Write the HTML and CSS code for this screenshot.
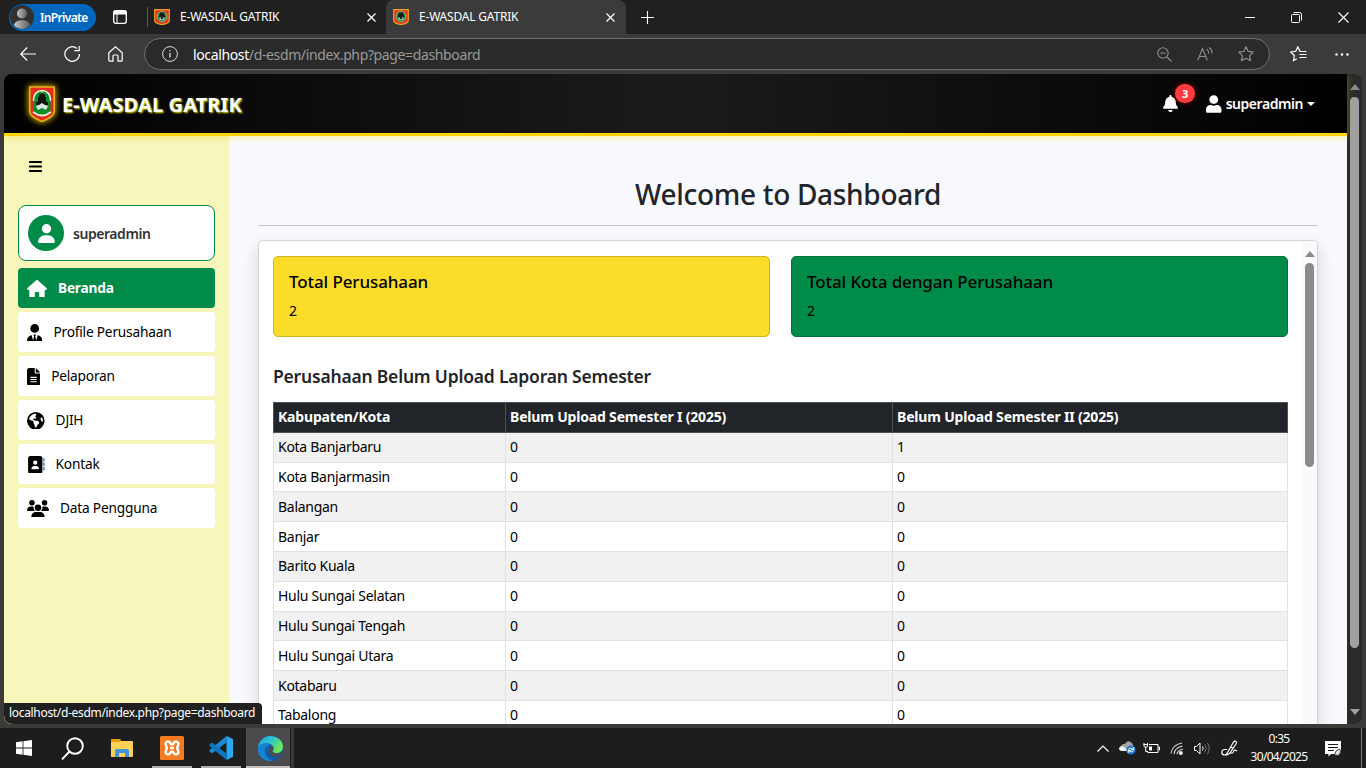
FILE: index.html
```html
<!DOCTYPE html>
<html lang="id">
<head>
<meta charset="utf-8">
<title>E-WASDAL GATRIK</title>
<link rel="stylesheet" href="styles.css">
</head>
<body>
<svg class="defs" width="0" height="0">
  <symbol id="shield" viewBox="0 0 26 36">
    <path d="M.8 1h24.4v24.5C25.2 30 19 33 13 35.5 7 33 .8 30 .8 25.5z" fill="#e32b1b" stroke="#e8b21c" stroke-width="1.6"/>
    <path d="M4.5 12C5 1.5 21 1.5 21.500 12v13c-3 5-14 5-17 0z" fill="#098f2f"/>
    <path d="M4.600 15C3.500 1 22.500 1 21.400 15" fill="none" stroke="#eef5dc" stroke-width="1.500"/>
    <path d="M12 6h2v2h2v3h1v5h2v3H7v-3h2v-5h1V8h2z" fill="#101510"/>
    <path d="M7 20l3-1 3-2 3 2 3 1-2 4-4-2-4 2z" fill="#dfe5e0"/>
    <path d="M4 26q9 7 18 0" fill="none" stroke="#f4e9cf" stroke-width="1.800"/>
    <circle cx="13" cy="6" r="1" fill="#f3d22e"/>
  </symbol>
  <symbol id="favicon" viewBox="0 0 16 16">
    <path d="M.7.6h14.600v11C15.300 13.600 12 15 8 15.600 4 15 .7 13.600.7 11.600z" fill="#e5321f" stroke="#e6a51e" stroke-width="1.200"/>
    <ellipse cx="8" cy="7.500" rx="5" ry="5.300" fill="#159947" stroke="#b9c79a" stroke-width=".6"/>
    <path d="M6 3.500h4l1.500 5h-7z" fill="#151a17"/><path d="M5 8.500h6l-1 2.500H6z" fill="#a9b5a9"/><path d="M7 7h2v3H7z" fill="#222"/>
  </symbol>
  <symbol id="user" viewBox="0 0 448 512"><path d="M224 256A128 128 0 1 0 224 0a128 128 0 1 0 0 256zm-45.700 48C79.800 304 0 383.800 0 482.300C0 498.700 13.300 512 29.700 512H418.300c16.400 0 29.700-13.300 29.700-29.700C448 383.800 368.200 304 269.700 304H178.300z"/></symbol>
</svg>
<div class="window">
  <div class="tabstrip">
    <div class="profile">
      <svg width="24" height="24" viewBox="0 0 24 24"><defs><linearGradient id="pg" x1="0" x2="1"><stop offset="0" stop-color="#c4c4c4"/><stop offset="1" stop-color="#5d5d5d"/></linearGradient></defs><circle cx="12" cy="12" r="12" fill="#33302f"/><circle cx="12" cy="8.500" r="5" fill="url(#pg)"/><path d="M4 20.500c0-7 16-7 16 0C15 25 9 25 4 20.500z" fill="url(#pg)"/></svg>
      <span>InPrivate</span>
    </div>
    <svg class="panes" width="14" height="14" viewBox="0 0 14 14"><rect x=".7" y=".7" width="12.600" height="12.600" rx="2" fill="none" stroke="#fff" stroke-width="1.300"/><path d="M1 1h12v3H1zM4 4v9" fill="#fff" stroke="#fff"/></svg>
    <div class="tab first"><svg width="16" height="16"><use href="#favicon"/></svg><span>E-WASDAL GATRIK</span><svg class="x" width="9" height="9" viewBox="0 0 9 9"><path d="M.5.5l8 8M8.500.5l-8 8" stroke="#fff" stroke-width="1.200"/></svg></div>
    <div class="tab active"><svg width="16" height="16"><use href="#favicon"/></svg><span>E-WASDAL GATRIK</span><svg class="x" width="9" height="9" viewBox="0 0 9 9"><path d="M.5.5l8 8M8.500.5l-8 8" stroke="#fff" stroke-width="1.200"/></svg></div>
    <svg class="plus" width="13" height="13" viewBox="0 0 13 13"><path d="M6.500 0v13M0 6.500h13" stroke="#fff" stroke-width="1.100"/></svg>
    <div class="controls">
      <svg width="10" height="11" viewBox="0 0 10 11"><path d="M0 5.500h10" stroke="#fff"/></svg>
      <svg width="11" height="11" viewBox="0 0 11 11" fill="none" stroke="#fff"><rect x=".5" y="2.500" width="8" height="8" rx="1"/><path d="M2.500 .5h6q2 0 2 2v6"/></svg>
      <svg width="11" height="11" viewBox="0 0 11 11"><path d="M.5.5l10 10M10.500.5l-10 10" stroke="#fff" stroke-width="1.100"/></svg>
    </div>
  </div>
  <div class="toolbar">
    <svg width="16" height="14" viewBox="0 0 16 14" fill="none" stroke="#fff" stroke-width="1.200"><path d="M16 7H.8M7.200.5L.8 7l6.400 6.500"/></svg>
    <svg width="17" height="16" viewBox="0 0 17 16" fill="none" stroke="#fff" stroke-width="1.200"><path d="M15.500 8A7.300 7.300 0 1 1 13 2.500M15.200 0v4.600h-4.800"/></svg>
    <svg width="15" height="16" viewBox="0 0 15 16" fill="none" stroke="#fff" stroke-width="1.200"><path d="M.8 6.700L7.500.8l6.700 5.900v7.500q0 1-1 1H10V10q0-1-1-1H6q-1 0-1 1v5.200H1.800q-1 0-1-1z"/></svg>
    <div class="address">
      <svg width="16" height="16" viewBox="0 0 16 16" fill="none" stroke="#ddd"><circle cx="8" cy="8" r="7.400"/><path d="M8 7v4.500M8 4.200v1.300" stroke-width="1.300"/></svg>
      <span class="url"><b>localhost</b>/d-esdm/index.php?page=dashboard</span>
      <div class="address-icons">
        <svg width="15" height="15" viewBox="0 0 15 15" fill="none" stroke="#8e8e8e" stroke-width="1.100"><circle cx="6" cy="6" r="5.200"/><path d="M10 10l4.500 4.500M3.200 6h5.600"/></svg>
        <svg width="16" height="14" viewBox="0 0 16 14" fill="none" stroke="#8e8e8e" stroke-width="1.100"><path d="M.7 13.500L5.500 1.500l4.800 12M2.300 9.500h6.400M9.500 2q2.500 1.500 2 4.500M12 .5q3.500 2 2.800 6"/></svg>
        <svg width="16" height="16" viewBox="0 0 16 16" fill="none" stroke="#8e8e8e" stroke-width="1.200" stroke-linejoin="round"><path d="M8 .8l2.200 4.600 5 .7-3.600 3.500.9 5L8 12.200l-4.500 2.400.9-5L.8 6.100l5-.7z"/></svg>
      </div>
    </div>
    <svg class="fav" width="17" height="16" viewBox="0 0 17 16" fill="none" stroke="#fff" stroke-width="1.200"><path d="M13.500 5.500L10 5.300 7.800.9 5.700 5.300l-5 .7 3.700 3.500-.9 5 3.300-1.800M9.500 8.500h7M9.500 11.500h7M12 5.500h4.500"/></svg>
    <svg width="14" height="3" viewBox="0 0 14 3" fill="#fff"><circle cx="1.500" cy="1.500" r="1.200"/><circle cx="7" cy="1.500" r="1.200"/><circle cx="12.500" cy="1.500" r="1.200"/></svg>
  </div>

  <div class="viewport">
    <div class="page">
      <header class="site-header">
        <svg class="logo" width="26" height="36"><use href="#shield"/></svg>
        <span class="brand">E-WASDAL GATRIK</span>
        <div class="bell">
          <svg width="15" height="17" viewBox="0 0 448 512" fill="#fff"><path d="M224 0c-17.700 0-32 14.300-32 32V51.200C119 66 64 130.600 64 208v18.800c0 47-17.300 92.400-48.500 127.600l-7.400 8.300c-8.400 9.400-10.400 22.900-5.300 34.400S19.400 416 32 416H416c12.600 0 24-7.400 29.200-18.900s3.100-25-5.300-34.400l-7.400-8.300C401.300 319.200 384 273.900 384 226.800V208c0-77.400-55-142-128-156.800V32c0-17.700-14.300-32-32-32zm45.300 493.300c12-12 18.700-28.300 18.700-45.300H160c0 17 6.700 33.300 18.700 45.300s28.300 18.700 45.300 18.700s33.300-6.700 45.300-18.700z"/></svg>
          <span class="badge">3</span>
        </div>
        <svg class="huser" width="15.500" height="18" viewBox="0 0 448 512" fill="#fff"><path d="M224 256c70.700 0 128-57.300 128-128S294.700 0 224 0 96 57.300 96 128s57.300 128 128 128zm89.600 32h-16.700c-22.200 10.200-46.900 16-72.900 16s-50.600-5.800-72.900-16h-16.700C60.200 288 0 348.200 0 422.400V464c0 26.500 21.500 48 48 48h352c26.500 0 48-21.500 48-48v-41.600c0-74.200-60.200-134.400-134.400-134.400z"/></svg>
        <span class="account">superadmin</span><i class="caret"></i>
      </header>
      <div class="body">
        <aside class="sidebar">
          <svg class="burger" width="13" height="11" viewBox="0 0 13 11"><path d="M.9 1h11.200M.9 5.500h11.200M.9 10h11.200" stroke="#000" stroke-width="1.900" stroke-linecap="round"/></svg>
          <div class="usercard"><span class="avatar"><svg width="17" height="19" fill="#fff"><use href="#user"/></svg></span><span class="name">superadmin</span></div>
          <nav>
            <a class="current"><svg width="20" height="17.600" viewBox="0 0 576 512"><path d="M575.800 255.500c0 18-15 32.100-32 32.100l-32 0 .7 160.200c0 2.700-.2 5.400-.5 8.100l0 16.200c0 22.100-17.900 40-40 40l-16 0c-1.100 0-2.200 0-3.300-.1c-1.400 .1-2.800 .1-4.200 .1L416 512l-24 0c-22.100 0-40-17.900-40-40l0-24 0-64c0-17.700-14.300-32-32-32l-64 0c-17.700 0-32 14.300-32 32l0 64 0 24c0 22.100-17.900 40-40 40l-24 0-31.900 0c-1.500 0-3-.1-4.500-.2c-1.200 .1-2.400 .2-3.600 .2l-16 0c-22.100 0-40-17.900-40-40l0-112c0-.9 0-1.900 .1-2.800l0-69.700-32 0c-18 0-32-14-32-32.100c0-9 3-17 10-24L266.400 8c7-7 15-8 22-8s15 2 21 7L564.800 231.500c8 7 12 15 11 24z"/></svg>Beranda</a>
            <a><svg width="15.400" height="17.600" viewBox="0 0 448 512"><path d="M96 128a128 128 0 1 0 256 0A128 128 0 1 0 96 128zm94.500 200.200l18.600 31L175.800 483.100l-36-146.900c-2-8.100-9.800-13.400-17.900-11.300C51.900 342.400 0 405.800 0 481.300c0 17 13.800 30.700 30.700 30.700H417.300c17 0 30.700-13.800 30.700-30.700c0-75.500-51.900-138.900-121.900-156.400c-8.100-2-15.900 3.300-17.900 11.300l-36 146.900L238.900 359.200l18.600-31c6.400-10.700-1.300-24.200-13.700-24.200H204.300c-12.400 0-20.100 13.600-13.700 24.200z"/></svg>Profile Perusahaan</a>
            <a><svg width="13.200" height="17.600" viewBox="0 0 384 512"><path fill-rule="evenodd" d="M64 0C28.700 0 0 28.700 0 64V448c0 35.300 28.700 64 64 64H320c35.300 0 64-28.700 64-64V160H256c-17.700 0-32-14.300-32-32V0H64zM256 0V128H384L256 0zM112 256H272c8.800 0 16 7.200 16 16s-7.200 16-16 16H112c-8.800 0-16-7.200-16-16s7.200-16 16-16zm0 64H272c8.800 0 16 7.200 16 16s-7.200 16-16 16H112c-8.800 0-16-7.200-16-16s7.200-16 16-16zm0 64H272c8.800 0 16 7.200 16 16s-7.200 16-16 16H112c-8.800 0-16-7.200-16-16s7.200-16 16-16z"/></svg>Pelaporan</a>
            <a><svg width="17.600" height="17.600" viewBox="0 0 512 512"><path fill-rule="evenodd" d="M57.700 193l9.400 16.400c8.300 14.500 21.900 25.200 38 29.800L163 255.700c17.200 4.900 29 20.600 29 38.500v39.900c0 11 6.200 21 16 25.900s16 14.900 16 25.900v39c0 15.600 14.900 26.900 29.900 22.600c16.100-4.600 28.600-17.500 32.700-33.800l2.800-11.200c4.200-16.900 15.200-31.400 30.300-40l8.100-4.600c15-8.500 24.200-24.500 24.200-41.700v-8.300c0-12.700-5.100-24.900-14.100-33.900l-3.900-3.900c-9-9-21.200-14.100-33.900-14.100H257c-11.100 0-22.100-2.900-31.800-8.400l-34.500-19.700c-4.300-2.500-7.600-6.500-9.200-11.200c-3.200-9.600 1.100-20 10.200-24.500l5.900-3c6.600-3.300 14.300-3.900 21.300-1.500l23.200 7.700c8.200 2.700 17.200-.4 21.900-7.500c4.700-7 4.200-16.300-1.200-22.800l-13.600-16.300c-10-12-9.900-29.500 .3-41.300l15.700-18.300c8.800-10.300 10.200-25 3.500-36.700l-2.400-4.200c-3.500-.2-6.900-.3-10.400-.3C163.100 48 84.400 108.900 57.700 193zM464 256c0-36.800-9.600-71.400-26.400-101.500L412 164.800c-15.700 6.300-23.800 23.800-18.500 39.800l16.900 50.700c3.500 10.400 12 18.300 22.600 20.900l29.100 7.300c1.200-9 1.800-18.200 1.800-27.500zM0 256a256 256 0 1 1 512 0A256 256 0 1 1 0 256z"/></svg>DJIH</a>
            <a><svg width="17.600" height="17.600" viewBox="0 0 512 512"><path fill-rule="evenodd" d="M96 0C60.700 0 32 28.700 32 64V448c0 35.300 28.700 64 64 64H384c35.300 0 64-28.700 64-64V64c0-35.300-28.700-64-64-64H96zM208 288h64c44.200 0 80 35.800 80 80c0 8.800-7.200 16-16 16H144c-8.800 0-16-7.200-16-16c0-44.200 35.800-80 80-80zm-32-96a64 64 0 1 1 128 0 64 64 0 1 1 -128 0z"/><path fill="#3f78ad" d="M472 64h40v96h-40zM472 192h40v96h-40zM472 320h40v96h-40z"/></svg>Kontak</a>
            <a><svg width="22" height="17.600" viewBox="0 0 640 512"><path d="M144 0a80 80 0 1 1 0 160A80 80 0 1 1 144 0zM512 0a80 80 0 1 1 0 160A80 80 0 1 1 512 0zM0 298.700C0 239.800 47.800 192 106.700 192h42.700c15.900 0 31 3.500 44.600 9.700c-1.300 7.200-1.900 14.700-1.900 22.300c0 38.200 16.800 72.500 43.300 96H21.300C9.600 320 0 310.400 0 298.700zM404.600 320c26.600-23.500 43.300-57.800 43.300-96c0-7.600-.7-15-1.900-22.300c13.600-6.300 28.700-9.700 44.600-9.700h42.700C592.200 192 640 239.800 640 298.700c0 11.800-9.600 21.300-21.300 21.300H404.600zM224 224a96 96 0 1 1 192 0 96 96 0 1 1 -192 0zM128 485.300C128 411.700 187.700 352 261.300 352H378.700C452.300 352 512 411.700 512 485.300c0 14.700-11.900 26.700-26.700 26.700H154.700c-14.700 0-26.700-11.900-26.700-26.700z"/></svg>Data Pengguna</a>
          </nav>
        </aside>
        <main>
          <h1>Welcome to Dashboard</h1>
          <section class="panel">
            <div class="panel-content">
              <div class="stats">
                <div class="stat yellow"><h5>Total Perusahaan</h5><p>2</p></div>
                <div class="stat green"><h5>Total Kota dengan Perusahaan</h5><p>2</p></div>
              </div>
              <h4>Perusahaan Belum Upload Laporan Semester</h4>
              <table>
                <colgroup><col class="c1"><col class="c2"><col class="c3"></colgroup>
                <thead><tr><th>Kabupaten/Kota</th><th>Belum Upload Semester I (2025)</th><th>Belum Upload Semester II (2025)</th></tr></thead>
                <tbody>
                  <tr><td>Kota Banjarbaru</td><td>0</td><td>1</td></tr>
                  <tr><td>Kota Banjarmasin</td><td>0</td><td>0</td></tr>
                  <tr><td>Balangan</td><td>0</td><td>0</td></tr>
                  <tr><td>Banjar</td><td>0</td><td>0</td></tr>
                  <tr><td>Barito Kuala</td><td>0</td><td>0</td></tr>
                  <tr><td>Hulu Sungai Selatan</td><td>0</td><td>0</td></tr>
                  <tr><td>Hulu Sungai Tengah</td><td>0</td><td>0</td></tr>
                  <tr><td>Hulu Sungai Utara</td><td>0</td><td>0</td></tr>
                  <tr><td>Kotabaru</td><td>0</td><td>0</td></tr>
                  <tr><td>Tabalong</td><td>0</td><td>0</td></tr>
                </tbody>
              </table>
            </div>
            <div class="panel-scroll"><i class="up"></i><i class="thumb"></i></div>
          </section>
        </main>
      </div>
    </div>
    <div class="page-scroll"><i class="up"></i><i class="thumb"></i><i class="down"></i></div>
    <div class="status">localhost/d-esdm/index.php?page=dashboard</div>
  </div>

  <div class="taskbar">
    <div class="app win"><svg width="16" height="16" viewBox="0 0 16 16" fill="#fff"><path d="M0 2.200L6.600 1.300v6.300H0zM7.400 1.200L16 0v7.600H7.400zM0 8.400h6.600v6.300L0 13.800zM7.400 8.400H16V16l-8.600-1.200z"/></svg></div>
    <div class="app"><svg width="23" height="23" viewBox="0 0 23 23" fill="none" stroke="#fff" stroke-width="1.900"><circle cx="14" cy="9" r="7.800"/><path d="M8.500 14.500L1 22.300"/></svg></div>
    <div class="app"><svg width="22" height="19" viewBox="0 0 22 19"><path d="M0 2.500V1q0-1 1-1h7l2 2h11q1 0 1 1v14q0 1-1 1H0z" fill="#ffcf56"/><path d="M0 3h8l2-2-1-1H1Q0 0 0 1z" fill="#e39a0c"/><path d="M4 18v-6q0-2 2-2h10q2 0 2 2v6h-4v-4H8v4z" fill="#3a96dd"/></svg></div>
    <div class="app open"><svg width="24" height="24" viewBox="0 0 24 24"><rect width="24" height="24" rx="1.500" fill="#f57a20"/><path d="M8 5.500a2.500 2.500 0 0 0-2 4q1.500 2.500 0 5a2.500 2.500 0 1 0 4.500 2q1.500-2 3 0a2.500 2.500 0 1 0 4.500-2q-1.500-2.500 0-5a2.500 2.500 0 1 0-4.500-2q-1.500 2-3 0a2.500 2.500 0 0 0-2.500-2zM10 12h4" fill="none" stroke="#fff" stroke-width="2.500"/></svg></div>
    <div class="app open"><svg width="24" height="24" viewBox="0 0 24 24"><path d="M17.500 0L24 3v18l-6.500 3z" fill="#29a7f0"/><path d="M17.500 0v6.500L3 17.500l-2.500-2V14z" fill="#1b8ad6"/><path d="M17.500 24v-6.500L3 6.500l-2.500 2V10z" fill="#0d78c0"/></svg></div>
    <div class="app open edge"><svg width="25" height="25" viewBox="0 0 24 24"><defs><linearGradient id="e1" x1="0" y1="0" x2="1" y2=".5"><stop offset="0" stop-color="#1f9de0"/><stop offset=".5" stop-color="#2fc3d0"/><stop offset="1" stop-color="#6bea55"/></linearGradient></defs><circle cx="12" cy="12" r="12" fill="#0c63b4"/><path d="M0 11C1 4 6 0 12 0c7 0 12 5 12 10 0 4-3 6.500-6.500 6.500-3 0-4.500-1.200-3.500-2.500 2-3-.5-7-5-7-4 0-8 2-9 4z" fill="url(#e1)"/><path d="M0 11c2-4 8-5 12-2-4-1-7 3-5 8 1 3 4 6 8 6.600C7 26-1 20 0 11z" fill="#1683d2"/><path d="M14 9.500c2 2 1 4-.2 5.200.7 2 5.200 3.300 9 .5L21 20c-4 2-10 0-11-4-.7-3 1-6 4-6.500z" fill="#4c4c4e"/><path d="M10 15c1 4 6 6 11.500 4-3 4-7 4.500-8 4.300-4-1-5.500-6-3.500-8.300z" fill="#115aa8"/></svg></div>
    <i class="edge-stack"></i>
    <div class="tray">
      <svg width="12" height="7" viewBox="0 0 12 7" fill="none" stroke="#fff" stroke-width="1.200"><path d="M.5 6.500L6 1l5.500 5.500"/></svg>
      <svg width="17" height="14" viewBox="0 0 17 14"><path d="M2.500 10a3 3 0 0 1 0-5.500Q4 2 6 3q2-4 5.500-2T14 6v4z" fill="#a5a5a5"/><path d="M0 7q2-3 5-1l5 4H3Q0 10 0 7z" fill="#eee"/><circle cx="12" cy="9" r="4.600" fill="#1677d2"/><path d="M9.300 8.500q2.500-3 5 0M14.700 9.500q-2.500 3-5 0M14.800 6v2.500h-2.500M9.200 12V9.500h2.500" stroke="#fff" fill="none"/></svg>
      <svg width="17" height="13" viewBox="0 0 17 13" fill="none" stroke="#fff"><path d="M1 1v3q0 1 1 1h1.500q1 0 1-1V1M.5 2.500h4.500M2.700 5v4.500H5M6 2.500h9v8H4.500M15.500 5h1v3h-1"/><path d="M6 4.500h3v4H6z" fill="#fff" stroke="none"/></svg>
      <svg width="14" height="13" viewBox="0 0 14 13" fill="none" stroke="#ddd" stroke-width="1.100"><path d="M1 11.500Q2 3 12 1M4 12Q4.500 6 12.500 4M7 12.300q.3-4 6-5.300"/><circle cx="10.800" cy="11" r="1.500" fill="#fff"/></svg>
      <svg width="17" height="13" viewBox="0 0 17 13" fill="none" stroke="#fff"><path d="M.5 4.500h2L6 1v11L2.500 8.500h-2zM8.500 4.500q1.300 2 0 4"/><path d="M10.800 2.500q2.700 4 0 8M13.500 1q3.500 5.500 0 11" stroke="#777"/></svg>
      <svg width="17" height="17" viewBox="0 0 17 17" fill="none" stroke="#fff" stroke-width="1.200"><path d="M6 9.500H3.500a2.500 2.500 0 0 0 0 5.500q2 0 3-2.500L12.500 2q1.500-1.500 2.500-.5t0 2.500L8.500 13.500 5.500 15M9.500 6.500l2.500 2M9 12.500q3 1.500 3.500-1t3.500-.5"/></svg>
      <div class="clock"><span>0:35</span><span>30/04/2025</span></div>
      <svg class="notes" width="17" height="17" viewBox="0 0 17 17"><path d="M0 1h16v9l-4 4H6l-2.500 2.500V14H0z" fill="#fff"/><path d="M3 4.500h10M3 7.500h10M3 10.500h6" stroke="#1d1d1d" stroke-width="1.200"/><path d="M9.500 15l1.500-4 3.500-2 1.500 3-2.500 3.500z" fill="#ddd" stroke="#222" stroke-width=".8"/></svg>
      <i class="show-desktop"></i>
    </div>
  </div>
</div>
</body>
</html>
```
FILE: styles.css
```css
* { box-sizing: border-box; }
body { margin: 0; font-family: "Noto Sans", "Open Sans", sans-serif; font-size: 14px; color: #212529; overflow: hidden; }
svg { display: block; flex: none; }
.defs { position: absolute; }
.window { width: 1366px; height: 768px; display: flex; flex-direction: column; background: #3b3a38; }

/* Browser chrome */
.tabstrip { height: 34px; background: #202020; display: flex; align-items: center; color: #fff; font-size: 12px; }
.profile { width: 87px; height: 27px; margin-left: 9px; border-radius: 14px; background: #0067bf; display: flex; align-items: center; gap: 6px; padding-left: 1px; font-weight: 600; letter-spacing: -.65px; }
.panes { margin-left: 17px; }
.tab { width: 240px; height: 34px; display: flex; align-items: center; padding: 0 11px 0 7px; font-size: 12px; letter-spacing: -.2px; }
.tab span { margin-left: 10px; padding-bottom: 2px; }
.tab .x { margin-left: auto; }
.tab.first { width: 239px; margin-left: 20px; padding: 0 10px 0 7px; background: linear-gradient(#5b5b5b, #5b5b5b) 0 50% / 1px 20px no-repeat; }
.tab.active { background: #3b3b3b; border-radius: 8px 8px 0 0; }
.plus { margin-left: 15px; }
.controls { margin-left: auto; margin-right: 17px; display: flex; gap: 36px; }
.toolbar { height: 40px; background: #3b3b3b; display: flex; align-items: center; padding-left: 20px; }
.toolbar > svg:nth-child(2) { margin-left: 28px; }
.toolbar > svg:nth-child(3) { margin-left: 27px; }
.address { width: 1126px; height: 32px; margin-left: 21px; border: 1px solid #6e6e6e; border-radius: 16px; background: #2a2a2a; display: flex; align-items: center; padding: 0 15px 0 17px; }
.url { margin-left: 15px; font-size: 14px; color: #999; letter-spacing: -.37px; }
.url b { color: #fff; font-weight: 400; }
.address-icons { margin-left: auto; display: flex; align-items: center; gap: 25px; }
.toolbar .fav { margin-left: 20px; margin-right: 28px; }

/* Page viewport */
.viewport { height: 650px; margin: 0 4px; display: flex; position: relative; background: #2b2b2b; border-radius: 8px; overflow: hidden; }
.page { width: 1343px; display: flex; flex-direction: column; }
.site-header { height: 62px; flex: none; border-bottom: 3px solid #ffd400; background: linear-gradient(90deg, #000 0%, #1b1b1b 50%, #000 100%); box-shadow: 0 2px 6px rgba(255, 215, 0, .35); position: relative; display: flex; align-items: center; padding: 0 32px 0 25px; color: #fff; }
.logo { filter: drop-shadow(0 0 3px #ffd70099) drop-shadow(0 0 3px #ffd70077); }
.brand { margin-left: 7px; font-size: 20px; font-weight: 700; letter-spacing: .12px; text-shadow: 1px 1px 2px #e8e000; padding-top: 1px; }
.bell { margin-left: auto; position: relative; }
.badge { position: absolute; left: 12px; top: -11px; width: 20px; height: 19px; border-radius: 10px; background: #ff3b3f; font-size: 11px; line-height: 19px; text-align: center; font-weight: 700; box-shadow: 0 0 5px #ff000088; }
.huser { margin-left: 28px; }
.account { margin-left: 4px; font-weight: 600; letter-spacing: -.45px; }
.caret { margin-left: 4px; border: 4px solid transparent; border-top-color: #fff; border-bottom: 0; }
.body { flex: 1; display: flex; min-height: 0; }
.sidebar { width: 225px; background: #f7f6bb; padding: 25px 14px 0; }
.burger { margin-left: 11px; }
.usercard { margin-top: 33px; height: 56px; border: 1px solid #008c48; border-radius: 8px; background: #fff; display: flex; align-items: center; gap: 9px; padding-left: 9px; font-weight: 600; color: #333; }
.name { letter-spacing: -.45px; }
.avatar { width: 36px; height: 36px; border-radius: 50%; background: #008c48; display: flex; align-items: center; justify-content: center; }
nav { margin-top: 7px; display: flex; flex-direction: column; gap: 4px; }
nav a { height: 40px; border-radius: 4px; background: #fff; display: flex; align-items: center; gap: 11px; padding: 0 0 1px 9px; color: #000; font-size: 13.700px; letter-spacing: -.2px; }
nav svg { fill: currentColor; margin-top: 2px; }
nav .current { background: #008c48; color: #fff; font-weight: 700; }
main { width: 1118px; background: #f8f9fc; padding: 36px 29px 0; display: flex; flex-direction: column; min-height: 0; }
h1, h4, h5, p { margin: 0; }
h1 { height: 54px; flex: none; border-bottom: 1px solid #c4c6c8; text-align: center; font-size: 28px; line-height: 44px; font-weight: 500; letter-spacing: -.3px; }
.panel { margin-top: 14px; flex: 1; min-height: 0; border: 1px solid #d4d4d5; border-bottom: 0; border-radius: 5px 5px 0 0; background: #fff; box-shadow: 0 8px 16px rgba(0, 0, 0, .15); display: flex; overflow: hidden; }
.panel-content { width: 1043px; padding: 15px 14px 0; }
.stats { display: flex; gap: 21px; }
.stat { width: 497px; height: 81px; border-radius: 5px; padding: 12px 15px; color: #000; }
.yellow { background: #fbdc29; border: 1px solid #ccb323; }
.green { background: #008c48; border: 1px solid #00723b; }
h5 { font-size: 17px; line-height: 26px; font-weight: 500; letter-spacing: -.1px; }
.stat p { line-height: 22px; margin-top: 5px; }
h4 { margin-top: 24px; height: 41px; line-height: 30px; font-size: 17.500px; font-weight: 600; letter-spacing: -.2px; }
table { width: 1014px; table-layout: fixed; border-collapse: collapse; color: #000; }
.c1 { width: 232px; } .c2 { width: 387px; } .c3 { width: 395px; }
th, td { padding: 0 4px; text-align: left; height: 29.800px; border: 1px solid #dee2e6; white-space: nowrap; line-height: 20px; letter-spacing: -.28px; }
th { background: #212529; color: #fff; border-color: #4d5154; font-weight: 700; letter-spacing: -.18px; }
tbody tr:nth-child(odd) { background: #f1f1f2; }
.panel-scroll { width: 15px; background: #fafafa; display: flex; flex-direction: column; align-items: center; padding-top: 10px; }
.up { border: 5px solid transparent; border-bottom: 6px solid #8a8a8a; border-top: 0; }
.down { border: 5px solid transparent; border-top: 6px solid #a0a0a0; border-bottom: 0; }
.thumb { width: 9px; border-radius: 5px; background: #8b8b8b; }
.panel-scroll .thumb { height: 204px; margin-top: 6px; }
.page-scroll { width: 15px; display: flex; flex-direction: column; align-items: center; padding: 10px 0 9px; }
.page-scroll .thumb { height: 551px; margin-top: 7px; background: #a0a0a0; }
.page-scroll .down { margin-top: auto; }
.status { position: absolute; left: 0; bottom: 0; width: 258px; height: 21px; background: #202020; border-radius: 0 4px 0 8px; color: #fff; font-size: 12px; line-height: 20px; padding-left: 5px; letter-spacing: -.32px; white-space: nowrap; }

/* Taskbar */
.taskbar { height: 40px; margin-top: 4px; background: #1d1d1d; display: flex; color: #fff; }
.app { width: 49px; height: 40px; display: flex; align-items: center; justify-content: center; }
.app.win { width: 48px; }
.app:nth-child(2) { width: 48px; }
.app:nth-child(3) { width: 51px; }
.app.open { background: linear-gradient(#b1aead, #b1aead) 50% 100% / 40px 2px no-repeat; }
.app.edge { width: 44px; margin-left: 1px; padding-left: 4px; background: linear-gradient(#c3c0be, #c3c0be) 0 100% / 100% 2px no-repeat, #4b4b4d; }
.edge-stack { width: 3px; background: #39393a; margin-left: 1px; }
.tray { margin-left: auto; display: flex; align-items: center; }
.tray > svg { margin-right: 10px; }
.tray > svg:nth-child(3) { margin-left: -3px; }
.clock { width: 60px; margin-left: 1px; text-align: center; display: flex; flex-direction: column; font-size: 12px; line-height: 18px; letter-spacing: -.7px; }
.tray .notes { margin: 0 19px 0 16px; }
.show-desktop { width: 5px; height: 40px; border-left: 1px solid #777; }
```
